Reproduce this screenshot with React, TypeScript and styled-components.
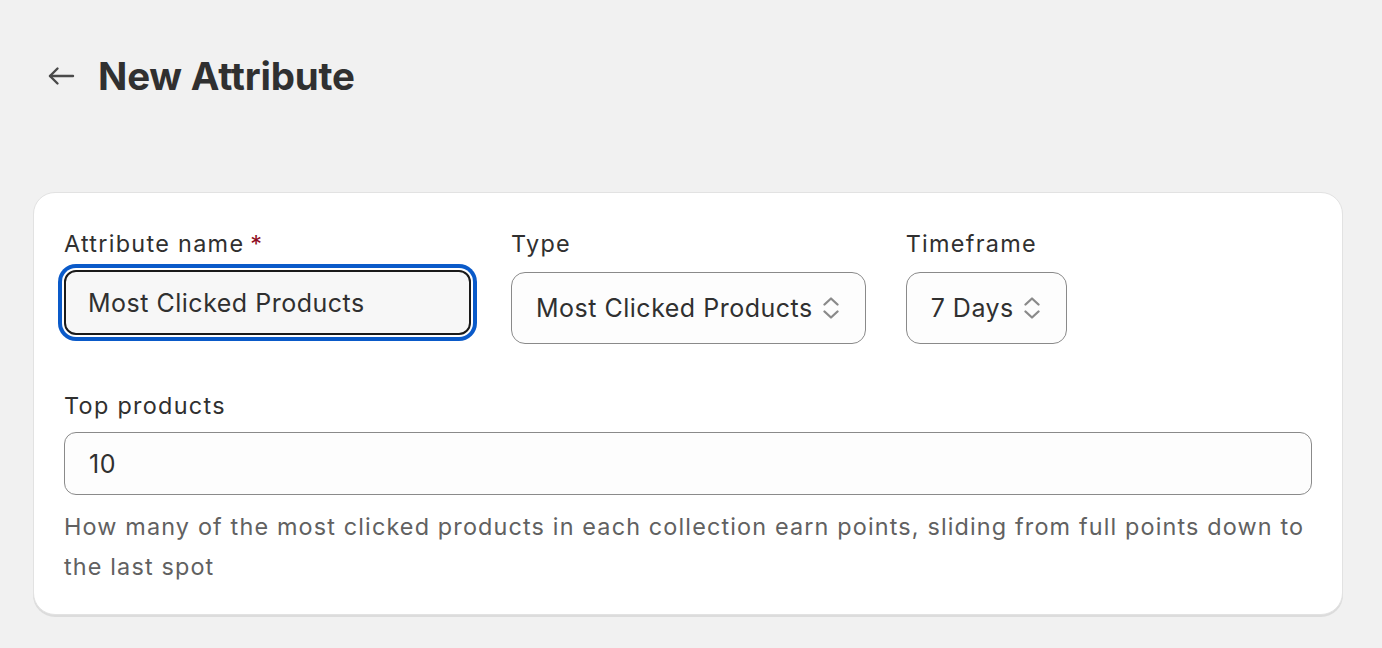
import React from "react";
import styled, { createGlobalStyle } from "styled-components";

const Global = createGlobalStyle`
  html, body { margin: 0; padding: 0; background: #f1f1f1; }
  body { font-family: Inter, "Noto Sans", "Liberation Sans", sans-serif; color: #303030; -webkit-font-smoothing: antialiased; }
  * { box-sizing: border-box; }
`;

const Page = styled.div`
  width: 1382px;
  height: 648px;
  padding: 48px 39px 0 33px;
  display: flex;
  flex-direction: column;
`;

const Header = styled.header`
  display: flex;
  align-items: center;
  gap: 22px;
  padding-left: 13px;
  height: 56px;
`;

const BackButton = styled.button`
  display: flex;
  align-items: center;
  justify-content: center;
  width: 30px;
  height: 30px;
  padding: 0;
  border: none;
  background: transparent;
  color: #4a4a4a;
  cursor: pointer;
`;

const Title = styled.h1`
  margin: 0;
  font-size: 38.5px;
  line-height: 56px;
  font-weight: 700;
  color: #303030;
  letter-spacing: -0.2px;
`;

const Card = styled.section`
  margin-top: 88px;
  background: #fff;
  border-radius: 22px;
  border: 1px solid #e2e2e2;
  box-shadow: 0 2px 0 #dcdcdc;
  padding: 36px 30px 27px 30px;
  display: flex;
  flex-direction: column;
  gap: 47px;
`;

const Row = styled.div`
  display: flex;
  align-items: flex-start;
  gap: 40px;
`;

const Field = styled.div<{ $width?: string }>`
  display: flex;
  flex-direction: column;
  width: ${(p) => p.$width ?? "auto"};
  flex: ${(p) => (p.$width ? "none" : "1")};
`;

const Label = styled.label`
  font-size: 23.4px;
  line-height: 30px;
  letter-spacing: 1.3px;
  color: #303030;
  margin-bottom: 11px;
  white-space: nowrap;
`;

const Required = styled.span`
  color: #8e0b21;
  margin-left: 6px;
`;

const TextInput = styled.div<{ $focused?: boolean; $height: number }>`
  height: ${(p) => p.$height}px;
  display: flex;
  align-items: center;
  padding: 0 ${(p) => (p.$focused ? 22 : 24)}px;
  font-size: 25px;
  letter-spacing: 0.5px;
  color: #303030;
  border-radius: 12px;
  background: ${(p) => (p.$focused ? "#f7f7f7" : "#fdfdfd")};
  border: ${(p) => (p.$focused ? "2px solid #1a1a1a" : "1px solid #8a8a8a")};
  box-shadow: ${(p) =>
    p.$focused ? "0 0 0 2px #fff, 0 0 0 6px #0a5ac9" : "none"};
  white-space: nowrap;
`;

const Select = styled.div`
  margin-top: 2px;
  height: 72px;
  display: flex;
  align-items: center;
  gap: 10px;
  padding: 0 26px 0 24px;
  font-size: 25px;
  letter-spacing: 0.5px;
  color: #303030;
  border-radius: 14px;
  border: 1px solid #8a8a8a;
  background: #fdfdfd;
  white-space: nowrap;
`;

const Help = styled.p`
  margin: 12px 0 0;
  font-size: 23.4px;
  line-height: 40px;
  letter-spacing: 1.15px;
  color: #616161;
`;

const Chevrons = () => (
  <svg width="16" height="26" viewBox="0 0 16 26" fill="none" stroke="#8a8a8a" strokeWidth="2.3" strokeLinecap="round" strokeLinejoin="round">
    <path d="M1.5 9.5 L8 3.5 L14.5 9.5" />
    <path d="M1.5 16.5 L8 22.5 L14.5 16.5" />
  </svg>
);

const ArrowLeft = () => (
  <svg width="28" height="20" viewBox="0 0 28 20" fill="none" stroke="#4a4a4a" strokeWidth="2.4" strokeLinecap="round" strokeLinejoin="round">
    <path d="M26 10 H3" />
    <path d="M10.5 2.5 L3 10 L10.5 17.5" />
  </svg>
);

export default function App() {
  return (
    <>
      <Global />
      <Page>
        <Header>
          <BackButton aria-label="Back">
            <ArrowLeft />
          </BackButton>
          <Title>New Attribute</Title>
        </Header>
        <Card>
          <Row>
            <Field $width="407px">
              <Label>
                Attribute name<Required>*</Required>
              </Label>
              <TextInput $focused $height={65}>Most Clicked Products</TextInput>
            </Field>
            <Field $width="auto" style={{ flex: "none" }}>
              <Label>Type</Label>
              <Select>
                Most Clicked Products
                <Chevrons />
              </Select>
            </Field>
            <Field $width="auto" style={{ flex: "none" }}>
              <Label>Timeframe</Label>
              <Select>
                7 Days
                <Chevrons />
              </Select>
            </Field>
          </Row>
          <Field>
            <Label>Top products</Label>
            <TextInput $height={63}>10</TextInput>
            <Help>
              How many of the most clicked products in each collection earn points, sliding from full points down to
              the last spot
            </Help>
          </Field>
        </Card>
      </Page>
    </>
  );
}
